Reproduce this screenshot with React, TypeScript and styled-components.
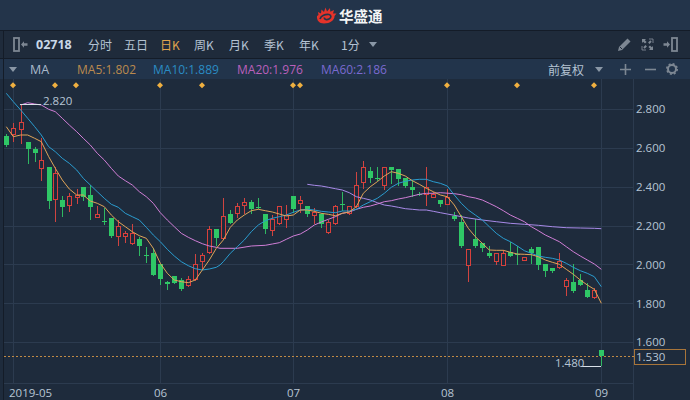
import React from "react";
import styled, { createGlobalStyle } from "styled-components";

const Global = createGlobalStyle`
  html, body { margin: 0; padding: 0; background: #1e2b3c; }
  body { font-family: "Open Sans", "Noto Sans CJK SC", sans-serif; overflow: hidden; }
`;

const Shell = styled.div`
  position: relative;
  width: 690px;
  height: 400px;
  display: flex;
  flex-direction: column;
  background: #1e2b3c;
  &::before {
    content: "";
    position: absolute;
    left: 3px;
    top: 31px;
    bottom: 0;
    width: 1px;
    background: #141c28;
  }
`;

const Header = styled.header`
  height: 30px;
  flex: none;
  background: #23344a;
  border-bottom: 1px solid #141c28;
  display: flex;
  align-items: center;
  padding-left: 316px;
  gap: 2px;
`;

const Brand = styled.span`
  font: bold 14.5px "Noto Sans CJK SC", sans-serif;
  letter-spacing: 0;
  color: #f2f4f6;
`;

const Toolbar = styled.div`
  height: 27px;
  flex: none;
  background: #1f2b3b;
  border-bottom: 1px solid #141c28;
  display: flex;
  align-items: center;
  padding-left: 13px;
  font: 12px "Noto Sans CJK SC", sans-serif;
  color: #b4c3d3;
`;

const Code = styled.b`
  font: bold 12.5px "Open Sans", sans-serif;
  color: #c9d8e8;
  width: 52px;
  margin-left: 8px;
`;

const Tab = styled.span<{ $w: number; $active?: boolean }>`
  width: ${(p) => p.$w}px;
  flex: none;
  white-space: nowrap;
  color: ${(p) => (p.$active ? "#e0a44e" : "#b4c3d3")};
`;

const IconGroup = styled.div`
  margin-left: auto;
  display: flex;
  align-items: center;
  gap: 9px;
  padding-right: 12px;
`;

const Caret = styled.i<{ $ml: number }>`
  width: 0;
  height: 0;
  flex: none;
  margin-left: ${(p) => p.$ml}px;
  border-left: 4px solid transparent;
  border-right: 4px solid transparent;
  border-top: 5px solid #8a97a6;
`;

const MaBar = styled.div`
  height: 20px;
  flex: none;
  background: #22344b;
  display: flex;
  align-items: center;
  padding-left: 9px;
  font: 12px "Open Sans", "Noto Sans CJK SC", sans-serif;
  color: #a9bacb;
`;

const MaName = styled.span`
  margin-left: 13px;
  width: 47px;
  font-size: 12.5px;
`;

const MaValue = styled.span<{ $color: string; $w: number }>`
  color: ${(p) => p.$color};
  width: ${(p) => p.$w}px;
  flex: none;
  white-space: nowrap;
`;

const Adjust = styled.span`
  margin-left: auto;
  font-family: "Noto Sans CJK SC", sans-serif;
  color: #b4c3d3;
`;

const BarIcons = styled.div`
  display: flex;
  align-items: center;
  gap: 14px;
  padding: 0 12px 0 17px;
  svg:last-child {
    margin-left: -4px;
  }
`;

const Chart = styled.svg`
  display: block;
  flex: none;
  text {
    font: 11.5px "Open Sans", sans-serif;
    fill: #b7c5d4;
  }
`;

type C = [number, number, number, number, number, number];
// x, bodyTop, bodyBottom, wickTop, wickBottom, 1=red 0=green  (values in 3x crop coordinates)
const a: C[] = [
  [19,138,165,133,168,0],[40,115,132,100,152,1],[62,95,118,45,158,1],[83,156,177,156,218,0],[104,178,188,172,213,0],
  [124,211,235,145,270,1],[146,232,332,232,353,0],[166,250,328,232,392,1],[187,331,350,318,377,0],[208,319,346,310,362,1],
  [230,314,322,297,338,1],[250,292,320,292,330,0],[271,315,350,285,388,0],[292,373,382,348,382,1],[313,392,394,353,402,0],
  [334,385,438,385,440,0],[355,409,439,390,466,1],[376,430,439,422,456,1],[397,430,459,403,462,1],[418,447,467,440,494,0],
  [439,496,497,470,517,0],[460,489,554,475,555,0],[481,522,567,522,582,0],[502,576,583,572,598,0],[523,558,578,558,578,0],
  [544,570,597,565,600,0],[565,566,586,558,588,1],[586,523,567,492,570,1],[607,496,512,490,538,1],[628,418,487,408,490,1],
  [649,418,444,418,465,0],
];
const b: C[] = [
  [10,198,265,145,268,1],[31,192,218,180,218,0],[52,168,190,160,200,1],[73,157,166,143,190,1],[94,156,178,150,190,0],
  [115,171,172,143,175,0],[136,193,236,193,248,0],[157,206,240,195,256,1],[178,169,220,169,222,1],[199,194,208,165,230,1],
  [220,139,177,139,187,0],[241,151,160,138,185,1],[262,169,193,169,197,0],[283,187,196,175,218,1],[304,193,222,190,232,0],
  [325,217,247,210,250,1],[346,169,220,165,222,1],[367,162,164,125,180,0],[388,169,188,168,192,1],[409,106,168,65,170,1],
  [430,52,97,33,113,1],[451,64,85,52,95,0],[472,83,85,52,90,0],[493,52,104,50,118,1],[514,52,60,52,98,0],
  [535,58,88,58,105,0],[556,83,107,83,112,0],[577,111,120,90,138,0],[598,133,135,125,136,0],[619,112,131,52,165,1],
  [640,133,142,125,142,1],[661,151,163,151,168,0],
];
const d: C[] = [
  [22,80,101,58,103,1],[43,138,147,127,150,0],[64,156,228,135,230,0],[85,238,284,238,332,1],[106,207,228,147,230,0],
  [127,220,234,220,242,0],[148,250,258,228,260,0],[169,250,272,250,282,1],[190,250,284,240,285,1],[211,245,257,215,258,0],
  [232,251,253,228,282,0],[253,262,271,262,271,1],[274,238,250,232,278,0],[295,232,285,232,298,0],[316,283,303,283,318,0],
  [337,294,302,294,306,0],[358,273,292,250,295,1],[379,331,347,325,375,1],[400,336,363,283,366,0],[421,329,344,313,346,0],
  [442,361,381,340,382,0],[463,361,382,355,384,1],
];

const conv = (list: C[], ox: number, oy: number) =>
  list.map(([x, t, bt, wt, wb, up]) => ({
    x: Math.round(ox + x / 3),
    t: Math.round(oy + t / 3),
    b: Math.round(oy + bt / 3),
    wt: Math.round(oy + wt / 3),
    wb: Math.round(oy + wb / 3),
    up,
  }));

const candles = [
  ...conv(a, 0, 90),
  ...conv(b, 220, 150),
  ...conv(d, 440, 170),
  { x: 601, t: 350, b: 356, wt: 350, wb: 365, up: 0 },
];

const pts = (list: number[], ox: number, oy: number) => {
  const out: string[] = [];
  for (let i = 0; i < list.length; i += 2) out.push(`${(ox + list[i] / 3).toFixed(1)},${(oy + list[i + 1] / 3).toFixed(1)}`);
  return out.join(" ");
};

const ma5 = [
  pts([19,110,40,140,62,135,83,135,104,145,124,155,146,200,166,235,187,270,208,297,230,315,250,315,271,333,292,340,313,350,334,375,355,395,376,410,397,425,418,437,439,445,460,475,481,520,502,550,523,570,544,575,565,578,586,570,607,540,628,510,649,475,670,450], 0, 90),
  pts([31,232,52,210,73,195,94,182,115,178,136,182,157,186,178,192,199,198,220,195,241,180,262,180,283,184,304,190,325,193,346,197,367,190,388,186,409,170,430,130,451,110,472,95,493,78,514,65,535,70,556,78,577,92,598,103,619,115,640,125,661,135,682,140], 220, 150),
  pts([43,105,64,140,85,175,106,200,127,220,148,240,169,241,190,241,211,247,232,252,253,253,274,254,295,260,316,270,337,277,358,283,379,298,400,313,421,330,442,345,463,358,484,400], 440, 170),
].join(" ");
const ma10 = [
  pts([19,10,40,35,62,60,83,85,104,110,124,135,146,170,166,185,187,205,208,220,230,240,250,265,271,285,292,305,313,325,334,343,355,352,376,370,397,380,418,390,439,412,460,435,481,455,502,478,523,498,544,515,565,527,586,536,607,540,628,537,649,532], 0, 90),
  pts([0,345,10,335,31,310,52,290,73,270,94,245,115,225,136,212,157,205,178,200,199,195,220,187,241,180,262,178,283,180,304,184,325,186,346,188,367,183,388,183,409,178,430,165,451,155,472,145,493,130,514,112,535,100,556,94,577,90,598,88,619,88,640,95,661,100,682,108], 220, 150),
  pts([43,75,64,100,85,120,106,135,127,150,148,170,169,190,190,205,211,215,232,228,253,242,274,250,295,258,316,262,337,265,358,270,379,280,400,292,421,302,442,310,463,320,484,350], 440, 170),
].join(" ");
const ma20 = [
  pts([62,45,83,38,104,42,124,45,146,58,166,65,187,85,208,105,230,125,250,145,271,165,292,190,313,210,334,235,355,258,376,272,397,285,418,305,439,320,460,340,481,368,502,390,523,410,544,430,565,442,586,452,607,461,628,468,649,472], 0, 90),
  pts([0,295,52,295,94,288,136,286,157,282,178,278,199,268,220,258,241,252,262,240,283,225,304,216,325,208,346,200,367,190,388,186,409,178,430,172,451,168,472,162,493,155,514,152,535,147,556,143,577,138,598,133,619,130,640,130,661,128], 220, 150),
  pts([43,71,64,74,85,80,106,84,127,90,148,100,169,110,190,122,211,135,232,145,253,155,274,170,295,182,316,195,337,205,358,215,379,230,400,245,421,258,442,270,463,282,484,298], 440, 170),
].join(" ");
const ma60 = [
  pts([262,103,283,106,304,108,325,112,346,116,367,120,388,128,409,140,430,145,451,150,472,158,493,165,514,168,535,172,556,176,577,178,598,180,619,180,640,184,661,188], 220, 150),
  pts([22,132,43,136,85,144,127,150,169,155,211,160,253,163,295,166,337,170,379,173,421,174,463,175,484,176], 440, 170),
].join(" ");

const GRID = "#2c3b4f";
const hLines = [109, 148, 187, 226, 264, 303, 342, 383];
const vLines = [13, 160, 293, 447, 601, 633];
const diamonds = [13, 55, 76, 160, 202, 293, 300, 447, 517, 594];
const prices: [string, number][] = [
  ["2.800", 109], ["2.600", 148], ["2.400", 187], ["2.200", 226], ["2.000", 265], ["1.800", 304], ["1.600", 342],
];
const dates: [string, number][] = [["2019-05", 9], ["06", 154], ["07", 287], ["08", 441], ["09", 595]];

const PriceChart = () => (
  <Chart width={690} height={321} viewBox="0 79 690 321">
    {hLines.map((y) => (
      <line key={y} x1={4} x2={633} y1={y + 0.5} y2={y + 0.5} stroke={GRID} />
    ))}
    {vLines.map((x) => (
      <line key={x} x1={x + 0.5} x2={x + 0.5} y1={79} y2={x === 633 ? 400 : 383} stroke={GRID} />
    ))}
    <line x1={4} x2={634} y1={356.5} y2={356.5} stroke="#c08a45" strokeDasharray="2 2" />
    {diamonds.map((x) => (
      <path key={x} d={`M${x} 82.2 L${x + 3} 85.2 L${x} 88.2 L${x - 3} 85.2 Z`} fill="#f0b040" />
    ))}
    {candles.map((c, i) => {
      const color = c.up ? "#d8403c" : "#2fc766";
      return (
        <g key={i}>
          <line x1={c.x + 0.5} x2={c.x + 0.5} y1={c.wt} y2={c.wb + 1} stroke={c.up ? "#d04440" : "#2fb862"} />
          {c.up ? (
            <rect x={c.x - 1.5} y={c.t + 0.5} width={4} height={Math.max(c.b - c.t, 1)} fill="#1e2b3c" stroke={color} />
          ) : (
            <rect x={c.x - 2} y={c.t} width={5} height={Math.max(c.b - c.t, 1)} fill={color} />
          )}
        </g>
      );
    })}
    <polyline points={ma60} fill="none" stroke="#a88ae8" />
    <polyline points={ma20} fill="none" stroke="#d07ed6" />
    <polyline points={ma10} fill="none" stroke="#2a9ccf" />
    <polyline points={ma5} fill="none" stroke="#e0a458" />
    <line x1={20} x2={41} y1={104.5} y2={104.5} stroke="#d9e0e8" />
    <text x={43} y={105}>2.820</text>
    <line x1={581} x2={601} y1={366.5} y2={366.5} stroke="#d9e0e8" />
    <text x={555} y={367}>1.480</text>
    {prices.map(([t, y]) => (
      <text key={t} x={636} y={y + 4}>{t}</text>
    ))}
    <rect x={634.5} y={349.5} width={51} height={15} fill="#1e2b3c" stroke="#a8753a" />
    <text x={636} y={361}>1.530</text>
    {dates.map(([t, x]) => (
      <text key={t} x={x} y={397}>{t}</text>
    ))}
  </Chart>
);

const Logo = () => (
  <svg width={21} height={17} viewBox="0 0 21 17">
    <path
      fill="#e5332a"
      d="M1 9 L2.5 8 L2 5 L5 6.5 L5.5 2.5 L8 5 L9.5 0.5 L11 4.5 L14 1 L14.3 4.8 L18 3 L17 6.5 L20.5 6.5 L18.5 9 C18.8 13 14 16.5 8 16.5 C3 16.5 0.5 13 1 9 Z"
    />
    <path fill="none" stroke="#23344a" strokeWidth={1.7} d="M4 12 C5 8.5 9.5 7 13 7.5 C15.5 8 15.5 10.5 13 12 C11 13.2 8 12.5 8.5 10.5" />
  </svg>
);

const Icon = ({ children, w = 14, h = 14 }: { children: React.ReactNode; w?: number; h?: number }) => (
  <svg width={w} height={h} viewBox={`0 0 ${w} ${h}`}>{children}</svg>
);

const ICON = "#7d8793";

const App = () => (
  <>
    <Global />
    <Shell>
      <Header>
        <Logo />
        <Brand>华盛通</Brand>
      </Header>
      <Toolbar>
        <Icon w={15} h={15}>
          <rect x={1} y={1} width={5} height={13} fill="none" stroke={ICON} strokeWidth={1.8} />
          <path d="M8 7.5 L11 4.2 V6.3 H14.5 V8.7 H11 V10.8 Z" fill={ICON} />
        </Icon>
        <Code>02718</Code>
        <Tab $w={36}>分时</Tab>
        <Tab $w={36}>五日</Tab>
        <Tab $w={34} $active>日K</Tab>
        <Tab $w={35}>周K</Tab>
        <Tab $w={35}>月K</Tab>
        <Tab $w={35}>季K</Tab>
        <Tab $w={42}>年K</Tab>
        <Tab $w={20}>1分</Tab>
        <Caret $ml={8} />
        <IconGroup>
          <Icon w={15} h={15}>
            <path d="M1 14 L2 10 L10.5 1.5 L13.5 4.5 L5 13 Z" fill={ICON} />
            <path d="M3 10 L5 12" stroke="#1f2b3b" />
          </Icon>
          <Icon w={13} h={13}>
            <path d="M8 1 H12 V5 M1 8 V12 H5" fill="none" stroke={ICON} strokeWidth={0.9} />
            <path d="M1 1 H5 L3.8 2.2 L5.6 4 L4 5.6 L2.2 3.8 L1 5 Z M12 12 H8 L9.2 10.8 L7.4 9 L9 7.4 L10.8 9.2 L12 8 Z" fill={ICON} />
            <path d="M7.8 5.2 L10 3 M3 10 L5.2 7.8" stroke={ICON} strokeWidth={2} />
          </Icon>
          <Icon w={15} h={15}>
            <rect x={9} y={1} width={5} height={13} fill="none" stroke={ICON} strokeWidth={1.8} />
            <path d="M7 7.5 L4 4.2 V6.3 H0.5 V8.7 H4 V10.8 Z" fill={ICON} />
          </Icon>
        </IconGroup>
      </Toolbar>
      <MaBar>
        <Caret $ml={0} />
        <MaName>MA</MaName>
        <MaValue $color="#bb8a4e" $w={76}>MA5:1.802</MaValue>
        <MaValue $color="#2a8cc4" $w={84}>MA10:1.889</MaValue>
        <MaValue $color="#bb60bb" $w={84}>MA20:1.976</MaValue>
        <MaValue $color="#7a6ad0" $w={84}>MA60:2.186</MaValue>
        <Adjust>前复权</Adjust>
        <Caret $ml={11} />
        <BarIcons>
          <Icon w={11} h={11}>
            <path d="M0 5.5 H11 M5.5 0 V11" stroke={ICON} strokeWidth={1.6} />
          </Icon>
          <Icon w={11} h={11}>
            <path d="M0 5.5 H11" stroke={ICON} strokeWidth={1.6} />
          </Icon>
          <Icon w={12} h={12}>
            <circle cx={6} cy={6} r={4} fill="none" stroke={ICON} strokeWidth={2} />
            <circle cx={6} cy={6} r={5.2} fill="none" stroke={ICON} strokeWidth={1.6} strokeDasharray="2 2.08" />
          </Icon>
        </BarIcons>
      </MaBar>
      <PriceChart />
    </Shell>
  </>
);

export default App;
